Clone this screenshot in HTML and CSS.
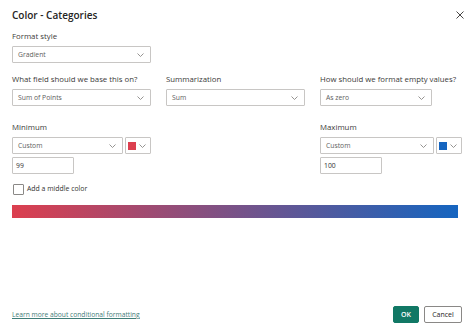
FILE: index.html
```html
<!DOCTYPE html>
<html lang="en">
<head>
  <meta charset="UTF-8">
  <title>Color - Categories</title>
  <link rel="stylesheet" href="styles.css">
</head>
<body>
  <div class="dialog">
    <!-- Header -->
    <div class="dialog-header">
      <h1 class="title">Color - Categories</h1>
      <button class="close" aria-label="Close">
        <svg width="8" height="8" viewBox="0 0 8 8"><path d="M0.5 0.5L7.5 7.5M7.5 0.5L0.5 7.5" stroke="#484644" stroke-width="1"/></svg>
      </button>
    </div>

    <!-- Format style -->
    <div class="field">
      <div class="label">Format style</div>
      <div class="select">
        <span>Gradient</span>
        <svg class="chev" width="7" height="4" viewBox="0 0 7 4"><path d="M0.5 0.5L3.5 3.5L6.5 0.5" fill="none" stroke="#8a8886" stroke-width="0.9"/></svg>
      </div>
    </div>

    <div class="row">
      <div class="field">
        <div class="label">What field should we base this on?</div>
        <div class="select">
          <span>Sum of Points</span>
          <svg class="chev" width="7" height="4" viewBox="0 0 7 4"><path d="M0.5 0.5L3.5 3.5L6.5 0.5" fill="none" stroke="#8a8886" stroke-width="0.9"/></svg>
        </div>
      </div>
      <div class="field">
        <div class="label">Summarization</div>
        <div class="select">
          <span>Sum</span>
          <svg class="chev" width="7" height="4" viewBox="0 0 7 4"><path d="M0.5 0.5L3.5 3.5L6.5 0.5" fill="none" stroke="#8a8886" stroke-width="0.9"/></svg>
        </div>
      </div>
      <div class="field">
        <div class="label">How should we format empty values?</div>
        <div class="select narrow">
          <span>As zero</span>
          <svg class="chev" width="7" height="4" viewBox="0 0 7 4"><path d="M0.5 0.5L3.5 3.5L6.5 0.5" fill="none" stroke="#8a8886" stroke-width="0.9"/></svg>
        </div>
      </div>
    </div>

    <!-- Minimum / Maximum -->
    <div class="row range">
      <div class="field">
        <div class="label">Minimum</div>
        <div class="picker">
          <div class="select short">
            <span>Custom</span>
            <svg class="chev" width="7" height="4" viewBox="0 0 7 4"><path d="M0.5 0.5L3.5 3.5L6.5 0.5" fill="none" stroke="#8a8886" stroke-width="0.9"/></svg>
          </div>
          <div class="swatch-btn">
            <span class="swatch red"></span>
            <svg class="chev" width="7" height="4" viewBox="0 0 7 4"><path d="M0.5 0.5L3.5 3.5L6.5 0.5" fill="none" stroke="#8a8886" stroke-width="0.9"/></svg>
          </div>
        </div>
        <div class="text-input">99</div>
      </div>
      <div></div>
      <div class="field">
        <div class="label">Maximum</div>
        <div class="picker">
          <div class="select short wide">
            <span>Custom</span>
            <svg class="chev" width="7" height="4" viewBox="0 0 7 4"><path d="M0.5 0.5L3.5 3.5L6.5 0.5" fill="none" stroke="#8a8886" stroke-width="0.9"/></svg>
          </div>
          <div class="swatch-btn">
            <span class="swatch blue"></span>
            <svg class="chev" width="7" height="4" viewBox="0 0 7 4"><path d="M0.5 0.5L3.5 3.5L6.5 0.5" fill="none" stroke="#8a8886" stroke-width="0.9"/></svg>
          </div>
        </div>
        <div class="text-input">100</div>
      </div>
    </div>

    <label class="check">
      <span class="box"></span>
      Add a middle color
    </label>

    <div class="gradient"></div>

    <!-- Footer -->
    <div class="dialog-footer">
      <a class="learn" href="#">Learn more about conditional formatting</a>
      <div class="actions">
        <button class="btn primary">OK</button>
        <button class="btn">Cancel</button>
      </div>
    </div>
  </div>
</body>
</html>
```

FILE: styles.css
```css
* {
  box-sizing: border-box;
}

body {
  margin: 0;
  font-family: 'Open Sans', 'Noto Sans', sans-serif;
  background: #ffffff;
  color: #323130;
}

.dialog {
  height: 335px;
  display: flex;
  flex-direction: column;
  padding: 7px 12px 12px 12px;
}

.dialog-header {
  display: flex;
  justify-content: space-between;
  align-items: center;
  height: 16px;
}

.title {
  margin: 0;
  font-size: 10px;
  font-weight: 600;
  line-height: 16px;
  color: #252423;
}

.close {
  border: none;
  background: none;
  padding: 0;
  margin-right: -8px;
  width: 20px;
  height: 16px;
  display: flex;
  align-items: center;
  justify-content: center;
}

.field {
  display: flex;
  flex-direction: column;
}

.dialog-header + .field {
  margin-top: 7px;
}

.label {
  font-size: 7.8px;
  line-height: 12px;
  white-space: nowrap;
  color: #3b3a39;
  margin-bottom: 4px;
}

.select {
  width: 139px;
  height: 17px;
  border: 1px solid #c8c6c4;
  border-radius: 1px;
  display: flex;
  align-items: center;
  justify-content: space-between;
  padding: 0 6px 0 5px;
  font-size: 6.8px;
  color: #605e5c;
}

.select.narrow {
  width: 112px;
}

.select.short {
  width: 113px;
}

.select.short.wide {
  width: 114px;
}

.row {
  display: grid;
  grid-template-columns: 139px 139px 142px;
  column-gap: 15px;
  margin-top: 10px;
}

.row.range {
  margin-top: 15px;
}

.picker {
  display: flex;
  gap: 2px;
}

.swatch-btn {
  width: 26px;
  height: 17px;
  border: 1px solid #c8c6c4;
  border-radius: 1px;
  display: flex;
  align-items: center;
  justify-content: space-between;
  padding: 0 4px 0 2px;
}

.swatch {
  width: 8px;
  height: 8px;
}

.swatch.red {
  background: #dc3f4f;
}

.swatch.blue {
  background: #1565c0;
}

.text-input {
  width: 62px;
  height: 17px;
  margin-top: 3px;
  border: 1px solid #c8c6c4;
  border-radius: 1px;
  padding: 0 3px;
  font-size: 6.8px;
  line-height: 15px;
  color: #323130;
}

.check {
  display: flex;
  align-items: center;
  gap: 3px;
  margin-top: 9px;
  margin-left: 1px;
  font-size: 6.9px;
  line-height: 12px;
  color: #323130;
}

.box {
  width: 11px;
  height: 11px;
  border: 1px solid #8a8886;
  border-radius: 1px;
}

.gradient {
  height: 13px;
  width: 446px;
  margin-top: 10px;
  background: linear-gradient(to right, #dc3f4f, #1565c0);
}

.dialog-footer {
  margin-top: auto;
  display: flex;
  justify-content: space-between;
  align-items: center;
}

.learn {
  font-size: 6.7px;
  color: #3f7d78;
  text-decoration: underline;
}

.actions {
  display: flex;
  gap: 5px;
}

.btn {
  width: 38px;
  height: 17px;
  border: 1px solid #8a8886;
  border-radius: 2px;
  background: #ffffff;
  font-family: inherit;
  font-size: 7px;
  font-weight: 400;
  color: #252423;
  padding: 0;
}

.btn.primary {
  width: 26px;
  border-color: #117865;
  background: #117865;
  color: #ffffff;
  font-weight: 600;
}
```
